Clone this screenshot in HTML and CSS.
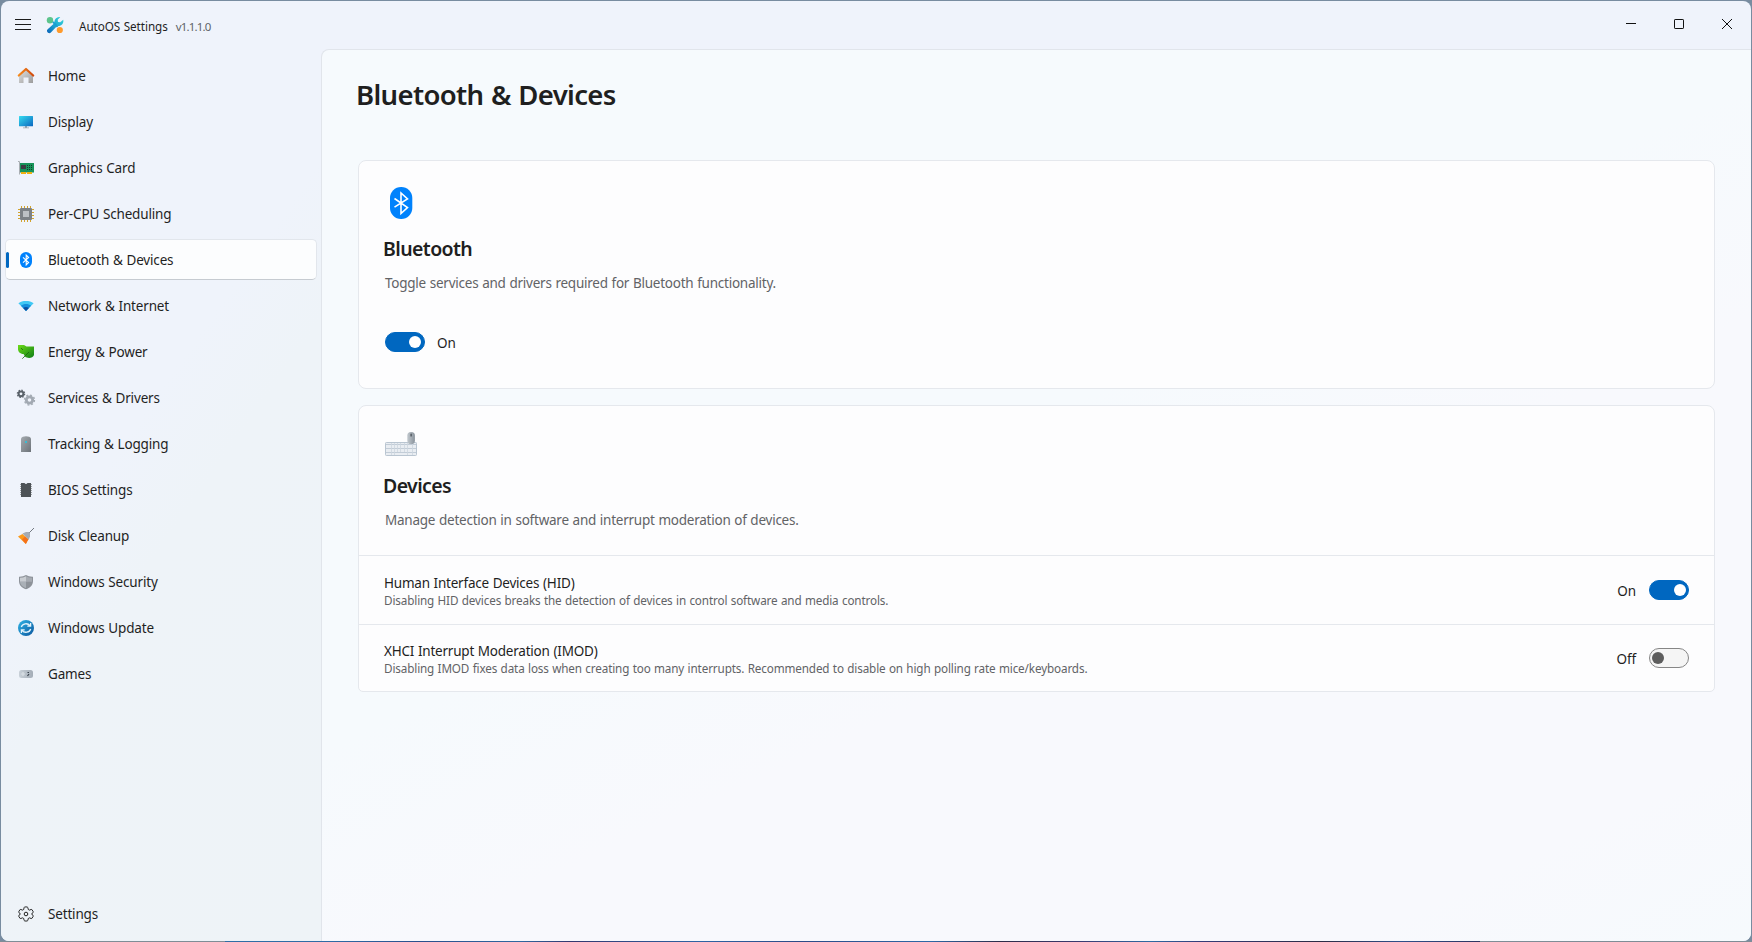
FILE: index.html
```html
<!DOCTYPE html>
<html lang="en">
<head>
<meta charset="utf-8">
<title>AutoOS Settings</title>
<link rel="stylesheet" href="styles.css">
</head>
<body>
<div class="window">
  <header class="titlebar">
    <svg class="menu" width="16" height="12" viewBox="0 0 16 12"><path d="M0 .5h16M0 5.500h16M0 10.500h16" stroke="#1b1b1b"/></svg>
    <svg class="logo" width="18" height="18" viewBox="0 0 18 18">
      <defs><linearGradient id="wrench" x1="1" y1="0" x2="0" y2="1"><stop offset="0" stop-color="#38d8d8"/><stop offset=".5" stop-color="#1ea8d2"/><stop offset="1" stop-color="#0a62b8"/></linearGradient></defs>
      <circle cx="4" cy="4.200" r="3.200" fill="#5cc48c"/>
      <circle cx="13.800" cy="14" r="3.100" fill="#ff9a2b"/>
      <path d="M14.300 1.100a4.900 4.900 0 0 0-5.700 6L1.700 13.200a2.300 2.300 0 0 0 3.200 3.300L11.300 9.800a4.900 4.900 0 0 0 5.900-6.100l-3 2.600-2.200-.3-.3-2.200z" fill="url(#wrench)"/>
      <path d="m7 5.800 4.600 5.100" stroke="#1a9fd0" stroke-width="2"/>
    </svg>
    <span class="app-name">AutoOS Settings</span>
    <span class="version">v1.1.1.0</span>
    <div class="controls">
      <svg width="10" height="10" viewBox="0 0 10 10"><path d="M0 4.500h10" stroke="#111"/></svg>
      <svg width="10" height="10" viewBox="0 0 10 10"><rect x=".5" y=".5" width="9" height="9" rx=".6" fill="none" stroke="#111"/></svg>
      <svg width="10" height="10" viewBox="0 0 10 10"><path d="m0 0 10 10M10 0 0 10" stroke="#111"/></svg>
    </div>
  </header>
  <div class="body">
    <nav class="nav">
      <a class="item"><svg class="icon" viewBox="0 0 18 18"><defs><linearGradient id="wall" x1="0" y1="0" x2="1" y2="1"><stop offset="0" stop-color="#e2e2e2"/><stop offset="1" stop-color="#9c9c9c"/></linearGradient><linearGradient id="roof"><stop offset="0" stop-color="#f58a1c"/><stop offset="1" stop-color="#d24a0c"/></linearGradient></defs><path d="M2 8l7-6 7 6v8h-4.500v-5.500h-5V16H2z" fill="url(#wall)"/><path d="M1.800 8.500 9 2l7.200 6.500" fill="none" stroke="url(#roof)" stroke-width="2.200" stroke-linecap="round" stroke-linejoin="round"/></svg><span>Home</span></a>
      <a class="item"><svg class="icon" viewBox="0 0 18 18"><defs><linearGradient id="screen" x1="0" y1="0" x2="1" y2="1"><stop offset="0" stop-color="#35dcf0"/><stop offset="1" stop-color="#0b66c0"/></linearGradient></defs><path d="M8 13h2v1.500h2v.8H6v-.8h2z" fill="#9aa3ad"/><rect x="2" y="3" width="14" height="10.300" rx=".5" fill="url(#screen)"/></svg><span>Display</span></a>
      <a class="item"><svg class="icon" viewBox="0 0 18 18"><path d="M1 2.500h1.500v13" fill="none" stroke="#a9aeb3"/><rect x="3" y="4" width="14" height="9.500" fill="#17935a"/><path d="M4 13h5v2H4zm6 0h5v2h-5z" fill="#eeb010"/><rect x="4" y="6" width="5" height="4" fill="#3c3c42"/><path d="M10 6.500h1m1 0h1m1 0h1M10 8.500h1m1 0h1m1 0h1M10 10.500h1m1 0h1m1 0h1" stroke="#123d2b"/></svg><span>Graphics Card</span></a>
      <a class="item"><svg class="icon" viewBox="0 0 18 18"><path d="M4.500 1v16M7.500 1v16M10.500 1v16M13.500 1v16M1 4.500h16M1 7.500h16M1 10.500h16M1 13.500h16" stroke="#d3a32c"/><rect x="3" y="3" width="12" height="12" rx="1" fill="#7d8186"/><rect x="6" y="6" width="6" height="6" fill="#bdc0c4"/></svg><span>Per-CPU Scheduling</span></a>
      <a class="item selected"><svg class="icon" viewBox="0 0 18 18"><rect x="3" y="1" width="12" height="16" rx="6" fill="#0082fc"/><path d="m6 6.300 5.600 5.200L9.200 14V4l2.400 2.500L6 11.700" fill="none" stroke="#fff" stroke-width="1.100"/></svg><span>Bluetooth &amp; Devices</span></a>
      <a class="item"><svg class="icon" viewBox="0 0 18 18"><path d="M1.400 6.300C3.500 4.600 6 4 9 4s5.500.6 7.600 2.300L9 14z" fill="#3fc8f4"/><path d="M3.900 8.800C5.400 7.500 7.100 7 9 7s3.600.5 5.100 1.800L9 14z" fill="#1490dc"/><path d="M6.200 11.100C7 10.400 8 10 9 10s2 .4 2.800 1.100L9 14z" fill="#0a4fa0"/></svg><span>Network &amp; Internet</span></a>
      <a class="item"><svg class="icon" viewBox="0 0 18 18"><defs><linearGradient id="leaf" x1="0" y1="0" x2="1" y2="1"><stop offset="0" stop-color="#6cdc18"/><stop offset="1" stop-color="#0f7d16"/></linearGradient></defs><path d="M1 2h6l2.500 1.500H17v8.500c-1 3-6 4-9 1.500L6.500 11C3 11 1 8.500 1 6z" fill="url(#leaf)"/><path d="M5.300 15.700 12 9M4 5l2 2" stroke="#1b6410" stroke-width=".8"/></svg><span>Energy &amp; Power</span></a>
      <a class="item"><svg class="icon" viewBox="0 0 18 18"><circle cx="4" cy="4.800" r="2.400" fill="none" stroke="#596169" stroke-width="2"/><circle cx="4" cy="4.800" r="3.700" fill="none" stroke="#596169" stroke-width="1.200" stroke-dasharray="1.450 1.450"/><circle cx="12.500" cy="11" r="3.200" fill="none" stroke="#a2a9b2" stroke-width="2.800"/><circle cx="12.500" cy="11" r="5" fill="none" stroke="#a2a9b2" stroke-width="1.300" stroke-dasharray="1.960 1.960"/></svg><span>Services &amp; Drivers</span></a>
      <a class="item"><svg class="icon" viewBox="0 0 18 18"><defs><linearGradient id="tower" x1="0" y1="0" x2="1" y2="1"><stop offset="0" stop-color="#a5abb0"/><stop offset="1" stop-color="#6c7278"/></linearGradient></defs><path d="M4 3.500C5 .5 13 .5 14 3.500V17H4z" fill="url(#tower)"/><circle cx="9" cy="7" r="1" fill="#22c8e4"/></svg><span>Tracking &amp; Logging</span></a>
      <a class="item"><svg class="icon" viewBox="0 0 18 18"><path d="M3.500 3v12M14.500 3v12" stroke="#a1a5a8" stroke-dasharray="1 1"/><path d="M4 2h3.500q1.500 2 3 0H14v14H4z" fill="#4e5357"/></svg><span>BIOS Settings</span></a>
      <a class="item"><svg class="icon" viewBox="0 0 18 18"><path d="m12 6 5-5" stroke="#737981"/><path d="M5.500 6.500 9 5h3l1 1v3.500L11.500 13z" fill="#a5abb3"/><path d="M1 9.500 5.500 7l5.800 5.500-2.500 4.500z" fill="#fb9a1c"/><path d="M5 12.500 8 9.500l3.300 3-2.500 4.500z" fill="#f4701a"/></svg><span>Disk Cleanup</span></a>
      <a class="item"><svg class="icon" viewBox="0 0 18 18"><path d="M9 2q3 2 7 1.800V8c0 4.500-3 7-7 8.300C5 15 2 12.500 2 8V3.800Q6 4 9 2z" fill="#8d9299"/><path d="M9 3.200q-3 1.600-6 1.600V8.800h6z" fill="#c9cdd2"/><path d="M9 3.200q3 1.600 6 1.600V8.800H9z" fill="#a6abb2"/><path d="M3 8.800h6v6.400C5.800 14 3.300 12 3 8.800z" fill="#aab0b7"/></svg><span>Windows Security</span></a>
      <a class="item"><svg class="icon" viewBox="0 0 18 18"><defs><linearGradient id="upd" x1="0" y1="0" x2="1" y2="1"><stop offset="0" stop-color="#2fb4e6"/><stop offset="1" stop-color="#0b569e"/></linearGradient></defs><circle cx="9" cy="9" r="8" fill="url(#upd)"/><path d="M4.300 8C5.300 4.500 10.500 3.500 13 6.700M13.600 4v3.200h-3.300M13.700 10c-1 3.500-6.200 4.500-8.700 1.300M4.400 14v-3.200h3.300" fill="none" stroke="#e4f3fc" stroke-width="1.300"/></svg><span>Windows Update</span></a>
      <a class="item"><svg class="icon" viewBox="0 0 18 18"><defs><linearGradient id="pad"><stop offset="0" stop-color="#c8d0d8"/><stop offset="1" stop-color="#a4adb7"/></linearGradient></defs><rect x="2" y="5" width="14" height="8" rx="2.500" fill="url(#pad)"/><path d="M4 9h4M6 7v4" stroke="#d9dfe5" stroke-width="1.200"/><path d="M10.500 7.500h1.500M12 9l-1.500 2" stroke="#39424c" stroke-width="1.200"/></svg><span>Games</span></a>
      <a class="item last"><svg class="icon" viewBox="0 0 18 18" fill="none" stroke="#222"><path d="m7.300 2 .5-.3h2.400l.8.700.3 1.900 1.200.7 1.900-.7.900.3 1.200 2.100-.2 1-1.500 1.200v.2l1.500 1.200.2 1-1.200 2.100-.9.300-1.900-.7-1.200.7-.3 1.900-.8.700H7.800l-.8-.7-.3-1.900-1.200-.7-1.900.7-.9-.3-1.200-2.100.2-1 1.500-1.200v-.2L1.700 7.700l-.2-1 1.200-2.100.9-.3 1.900.7 1.200-.7L7 2.400z" transform="translate(.3 .3) scale(.965)"/><circle cx="9" cy="9" r="1.800"/></svg><span>Settings</span></a>
    </nav>
    <main class="content">
      <h1>Bluetooth &amp; Devices</h1>
      <section class="card first">
        <svg class="card-icon" width="32" height="32" viewBox="0 0 32 32"><rect x="5" width="22.300" height="32" rx="11" fill="#0082fc"/><path d="m9.500 11.500 13 9-6.500 6V6l6.500 5.800-13 8.400" fill="none" stroke="#fff" stroke-width="1.600"/></svg>
        <h2>Bluetooth</h2>
        <p class="desc">Toggle services and drivers required for Bluetooth functionality.</p>
        <div class="switch-row"><span class="switch on"></span><span class="state">On</span></div>
      </section>
      <section class="card second">
        <div class="intro">
          <svg class="card-icon" width="32" height="32" viewBox="0 0 32 32"><defs><linearGradient id="mouse"><stop offset="0" stop-color="#c2c9cf"/><stop offset="1" stop-color="#89929b"/></linearGradient></defs><rect x=".5" y="14.500" width="31" height="13" rx=".8" fill="#e9edf2" stroke="#b9c5d1"/><path d="M1 16.500h30M1 20.500h30M1 24.500h30" stroke="#bdc8d4" stroke-width=".9"/><path d="M6.500 15v12M9.500 15v12M22.500 15v12M27.500 15v12M12.500 15v9M15.500 15v9M19.500 15v9" stroke="#cdd5de" stroke-width=".8"/><rect x="22.300" y="4" width="7.600" height="12" rx="3.600" fill="url(#mouse)"/><rect x="25.500" y="5.500" width="1.200" height="3" rx=".6" fill="#3e454c"/></svg>
          <h2>Devices</h2>
          <p class="desc">Manage detection in software and interrupt moderation of devices.</p>
        </div>
        <div class="row">
          <div class="label"><div class="name">Human Interface Devices (HID)</div><div class="hint">Disabling HID devices breaks the detection of devices in control software and media controls.</div></div>
          <span class="state">On</span><span class="switch on"></span>
        </div>
        <div class="row lower">
          <div class="label"><div class="name">XHCI Interrupt Moderation (IMOD)</div><div class="hint">Disabling IMOD fixes data loss when creating too many interrupts. Recommended to disable on high polling rate mice/keyboards.</div></div>
          <span class="state">Off</span><span class="switch"></span>
        </div>
      </section>
    </main>
  </div>
</div>
</body>
</html>
```
FILE: styles.css
```css
* { box-sizing: border-box; }
body {
  margin: 0;
  height: 942px;
  padding: 1px;
  overflow: hidden;
  background:
    linear-gradient(90deg, #7f8d96 225px, #2f6ea5 225px, #2f6ba5 330px, #2a4f8c 420px, #3068a0 520px, #33376e 570px, #2f64a4 700px, #2c4a86 800px, #2d68a6 930px, #2e2c48 1000px, #3a3a70 1080px, #2f6aa2 1150px, #343c78 1200px, #2c2c44 1320px, #30508a 1400px, #2e3560 1480px, #7f8d96 1480px) bottom / 100% 1px no-repeat,
    #788ca0;
  font-family: "Noto Sans", "Open Sans", sans-serif;
  font-size: 13.5px;
  word-spacing: .5px;
  color: #1f1f1f;
}
.window {
  height: 940px;
  display: flex;
  flex-direction: column;
  border-radius: 8px;
  overflow: hidden;
  background: #eff3fb;
}
.titlebar {
  height: 48px;
  flex: none;
  display: flex;
  align-items: center;
  padding-left: 14px;
}
.logo { margin-left: 15px; }
.app-name { margin: 2px 0 0 15px; font-size: 11.7px; letter-spacing: -.05px; }
.version { margin: 2px 0 0 8px; font-size: 11.5px; letter-spacing: -.85px; color: #606368; }
.controls { margin-left: auto; display: flex; gap: 38px; padding: 0 19px 2px 0; }
.body { flex: 1; display: flex; min-height: 0; }
.nav {
  width: 320px;
  flex: none;
  display: flex;
  flex-direction: column;
  gap: 5px;
  padding: 6px 4px 7px 4px;
  background: linear-gradient(125deg, #eff3fb 0%, #eff3fb 42%, #eef3f8 54%, #eef3f7 100%);
}
.item {
  position: relative;
  height: 41px;
  display: flex;
  flex: none;
  align-items: center;
  gap: 13px;
  padding-left: 11px;
  border: 1px solid transparent;
  border-radius: 5px;
  letter-spacing: -.17px;
}
.item span { padding-top: 1px; }
.icon { width: 18px; height: 18px; flex: none; overflow: visible; }
.selected {
  background: #fcfdfe;
  border-color: #e2e6ec;
  border-bottom-color: #c6cbd1;
}
.selected::before {
  content: "";
  position: absolute;
  left: 0;
  top: 12px;
  width: 3px;
  height: 16px;
  border-radius: 2px;
  background: #0067c0;
}
.last { margin-top: auto; }
.content {
  flex: 1;
  border: 1px solid #e1e5eb;
  border-width: 1px 0 0 1px;
  border-top-left-radius: 8px;
  background: linear-gradient(155deg, #f6fafd 0%, #f6fafd 45%, #f8f9fd 60%, #f8f9fd 88%, #f6fafd 100%);
  padding: 25px 36px 0 34px;
}
h1, h2, p { margin: 0; }
h1 { font-size: 27.5px; line-height: 40px; font-weight: 600; letter-spacing: -.65px; word-spacing: 1px; }
h2 { font-size: 19.5px; line-height: 28px; font-weight: 600; letter-spacing: -.6px; }
.card {
  border: 1px solid #e5e8ed;
  border-radius: 8px;
  background: #fdfdfe;
}
.first { height: 229px; margin: 45px 0 0 2px; padding: 26px; }
.second { height: 287px; margin: 16px 0 0 2px; border-radius: 8px 8px 5px 5px; }
.intro { height: 149px; padding: 22px 26px 0; }
.card-icon { display: block; }
h2 { margin: 16px 0 0 -2px; }
.intro h2 { margin-top: 12px; }
.desc { margin-top: 10px; line-height: 20px; color: #626366; letter-spacing: -.24px; }
.switch-row { display: flex; align-items: center; gap: 12px; margin-top: 38px; }
.switch {
  width: 40px;
  height: 20px;
  flex: none;
  border: 1px solid #868686;
  border-radius: 10px;
  background: #f5f5f5;
  display: flex;
  align-items: center;
  padding: 0 2px;
}
.switch::before { content: ""; width: 12px; height: 12px; border-radius: 50%; background: #5d5d5d; }
.switch.on { background: #0067c0; border-color: #0067c0; justify-content: flex-end; padding-right: 3px; }
.row .switch.on { padding-right: 2px; }
.switch.on::before { background: #fff; }
.state { letter-spacing: -.1px; line-height: 20px; padding-top: 2px; }
.row {
  height: 69px;
  border-top: 1px solid #e5e8ed;
  display: flex;
  align-items: center;
  padding: 0 25px;
}
.lower { height: 67px; }
.label { flex: 1; padding-top: 3px; }
.name { line-height: 18px; letter-spacing: -.22px; }
.hint { font-size: 11.7px; line-height: 17px; color: #626366; letter-spacing: -.13px; }
.row .state { margin-right: 13px; }
```
